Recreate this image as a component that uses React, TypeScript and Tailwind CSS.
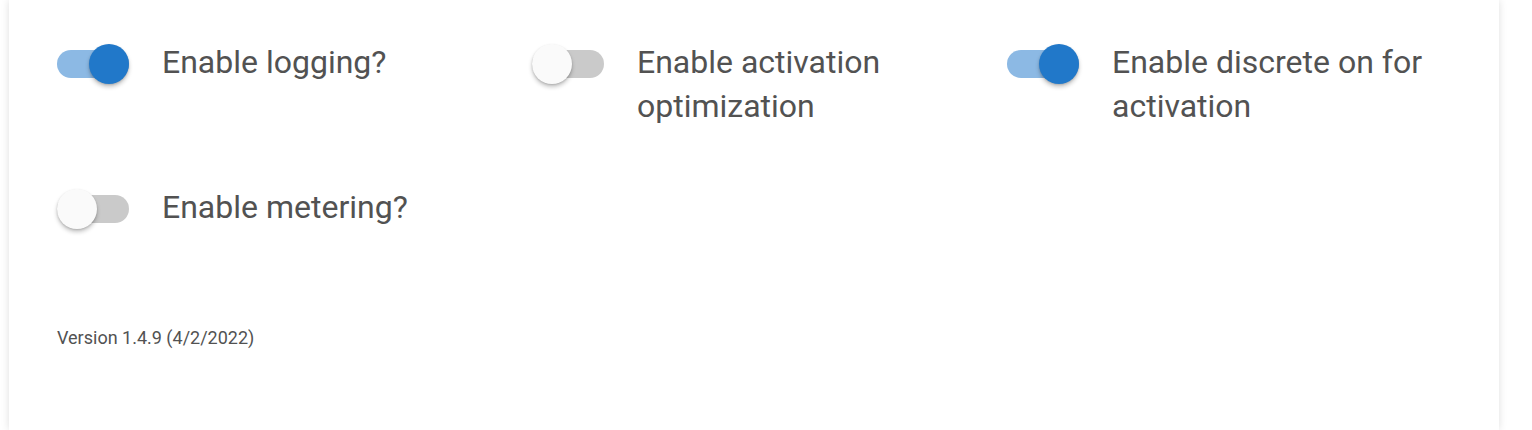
import { useState } from "react"

interface Option {
  label: string
  on: boolean
}

function Toggle({ checked, onChange }: { checked: boolean; onChange: () => void }) {
  return (
    <button
      type="button"
      onClick={onChange}
      className="relative mt-[4px] h-[40px] w-[72px] shrink-0 cursor-pointer"
    >
      <span
        className={`absolute left-0 top-[6px] h-[28px] w-[72px] rounded-full ${checked ? "bg-[#8cb9e4]" : "bg-[#cacaca]"}`}
      />
      <span
        className={`absolute top-0 h-[40px] w-[40px] rounded-full shadow-[0_3px_4px_rgba(0,0,0,0.22),0_1px_2px_rgba(0,0,0,0.14)] transition-all ${checked ? "left-[32px] bg-[#2178c9]" : "left-0 bg-[#fafafa]"}`}
      />
    </button>
  )
}

export default function App() {
  const [options, setOptions] = useState<Option[]>([
    { label: "Enable logging?", on: true },
    { label: "Enable activation optimization", on: false },
    { label: "Enable discrete on for activation", on: true },
    { label: "Enable metering?", on: false },
  ])

  const flip = (index: number) => {
    setOptions((prev) => prev.map((o, i) => (i === index ? { ...o, on: !o.on } : o)))
  }

  return (
    <div className="h-[430px] overflow-hidden bg-white pl-[9px] pr-[33px] font-['Roboto',sans-serif]">
      <div className="h-full bg-white pl-[48px] pt-[40px] shadow-[0_0_8px_rgba(0,0,0,0.13)]">
        <div className="grid grid-cols-[475px_475px_475px] gap-y-[57px]">
          {options.map((o, index) => (
            <div key={index} className="flex items-start">
              <Toggle checked={o.on} onChange={() => flip(index)} />
              <span className="ml-[33px] w-[340px] text-[32px] leading-[44px] text-[#525252]">
                {o.label}
              </span>
            </div>
          ))}
        </div>
        <p className="mt-[95px] text-[18px] leading-[27px] text-[#525252]">Version 1.4.9 (4/2/2022)</p>
      </div>
    </div>
  )
}
